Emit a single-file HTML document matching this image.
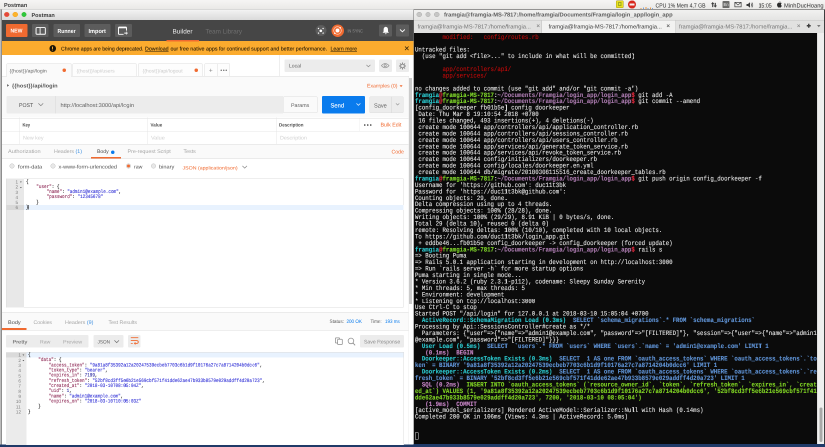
<!DOCTYPE html>
<html lang="en"><head><meta charset="utf-8"><title>Postman</title>
<style>
html,body{margin:0;padding:0;background:#fff;overflow:hidden}
#wrap{position:absolute;left:-2px;top:-83px;width:0;height:0}
#stage{position:absolute;left:0;top:0;width:827px;height:530px;zoom:2;transform:scale(.5);will-change:transform;text-rendering:geometricPrecision;transform-origin:0 0;overflow:hidden;background:#fff;font-family:"Liberation Sans", sans-serif}
#stage div{position:absolute;box-sizing:border-box}
#stage .t{white-space:pre;overflow:visible}
#stage svg{position:absolute;overflow:visible}
#stage .term{font-family:"Liberation Mono", monospace;transform-origin:0 0;white-space:pre}
#stage .term div, #stage .code div{position:static;white-space:pre}
#stage .term b{font-weight:bold}
#stage .code{font-family:"Liberation Mono", monospace;transform-origin:0 0;white-space:pre}
</style></head>
<body>
<div id="wrap"><div id="stage"><div id="page" style="left:2px;top:83px;width:825px;height:447px;overflow:hidden">
<div style="left:0px;top:444px;width:825px;height:3px;background:#203a68;"></div>
<div style="left:0px;top:0px;width:825px;height:9.3px;background:linear-gradient(#f6f5f4,#e9e8e6);"></div>
<div style="left:0px;top:9px;width:825px;height:0.5px;background:#b9b8b6;"></div>
<div class="t" style="left:4px;top:-0.4px;height:11.6px;line-height:11.6px;font-size:5.8px;color:#3c3c3c;font-weight:bold;transform:scaleX(0.9475);transform-origin:0 50%;">Postman</div>
<div style="left:616.2px;top:0.5px;width:7.5px;height:7.6px;background:#e9df22;border-radius:0.8px;border:0.4px solid #a89c14"></div>
<div style="left:618.2px;top:2px;width:3.4px;height:0.6px;background:#6a6a10;"></div>
<div style="left:618.2px;top:3.6px;width:1px;height:1px;background:#3c8a2a;"></div>
<div style="left:620.4px;top:3.6px;width:1px;height:1px;background:#3c8a2a;"></div>
<div style="left:618.2px;top:5.6px;width:3.4px;height:0.6px;background:#6a6a10;"></div>
<div style="left:627.9px;top:0.3px;width:8.2px;height:8.2px;background:#d8281e;border-radius:50%"></div>
<div style="left:629.4px;top:3.6px;width:5.2px;height:1.7px;background:#f4eeee;border-radius:0.3px"></div>
<div style="left:640.5px;top:8px;width:1px;height:1px;background:#e89a4a;"></div>
<div style="left:643px;top:7.6px;width:0.8px;height:1.4px;background:#7aa0d8;"></div>
<div style="left:645.5px;top:7.2px;width:0.8px;height:1.8px;background:#e89a4a;"></div>
<div style="left:647.6px;top:7.8px;width:0.8px;height:1.2px;background:#7aa0d8;"></div>
<div style="left:650px;top:7.4px;width:0.8px;height:1.6px;background:#e89a4a;"></div>
<div style="left:652.2px;top:8px;width:0.8px;height:1px;background:#7aa0d8;"></div>
<div class="t" style="left:655.7px;top:-0.7px;height:12px;line-height:12px;font-size:6px;color:#303030;transform:scaleX(0.8586);transform-origin:0 50%;">CPU 1% Mem 4,7 GB</div>
<svg style="left:710.8px;top:2.0px" width="6" height="5.6" viewBox="0 0 14 13"><path d="M4 0 L8 5 H5.3 V12 H2.7 V5 H0 Z M10 13 L6 8 H8.7 V2 H11.3 V8 H14 Z" fill="#3c3c3c"/></svg>
<div style="left:722.3px;top:1px;width:7.3px;height:6.9px;background:#6c6c6a;border-radius:0.8px"></div>
<div class="t" style="left:723.5px;top:0.6px;height:8.8px;line-height:8.8px;font-size:4.4px;color:#e8e8e8;transform:scaleX(0.9475);transform-origin:0 50%;">En</div>
<svg style="left:734.6px;top:2.2px" width="7" height="5.2" viewBox="0 0 14 10.4"><rect x="0.7" y="0.7" width="12.6" height="9" fill="none" stroke="#3c3c3c" stroke-width="1.4"/><path d="M1 1 L7 6 L13 1" fill="none" stroke="#3c3c3c" stroke-width="1.3"/></svg>
<svg style="left:746.5px;top:1.8px" width="6.4" height="6" viewBox="0 0 12.8 12"><path d="M0 4 H3 L7 0.5 V11.5 L3 8 H0 Z" fill="#3c3c3c"/><path d="M9 3 Q11.5 6 9 9 M10.8 1.2 Q14.5 6 10.8 10.8" fill="none" stroke="#3c3c3c" stroke-width="1.2"/></svg>
<div class="t" style="left:758.3px;top:-0.7px;height:12px;line-height:12px;font-size:6px;color:#303030;transform:scaleX(0.8791);transform-origin:0 50%;">15:05</div>
<svg style="left:777.2px;top:1.2px" width="4.8" height="6.6" viewBox="0 0 9.6 13.2"><path d="M6.8 0 Q6.6 2 4.8 2.6 Q4.9 0.8 6.8 0 Z M4.8 3.6 Q6.2 2.8 7.6 3.2 Q8.8 3.6 9.4 4.6 Q7.6 5.8 8 7.6 Q8.2 9 9.6 9.6 Q8.8 11.8 7.6 12.8 Q6.6 13.4 5.8 12.9 Q4.8 12.4 3.8 12.9 Q2.8 13.4 2 12.6 Q0 10.6 0 7.6 Q0.1 4.6 2.4 3.4 Q3.6 3 4.8 3.6 Z" fill="#2c2c2c"/></svg>
<div class="t" style="left:784.2px;top:-0.7px;height:12px;line-height:12px;font-size:6px;color:#303030;transform:scaleX(0.9575);transform-origin:0 50%;">MinhDucHoang</div>
<div style="left:0px;top:9.3px;width:0.8px;height:435.2px;background:#bcbcbc;"></div>
<div style="left:0.8px;top:9.3px;width:1.1px;height:435.2px;background:#8e8e8e;"></div>
<div style="left:2px;top:9.4px;width:411.3px;height:10.7px;background:linear-gradient(#fbfbfb,#f0f0f0 12%,#dadada);"></div>
<div style="left:4.1px;top:11.9px;width:5.3px;height:5.3px;background:#e2463f;border-radius:50%;border:0.5px solid #ee7c42"></div>
<div style="left:12.6px;top:11.9px;width:5.3px;height:5.3px;background:#fcb42c;border-radius:50%;border:0.5px solid #f4a224"></div>
<div style="left:21.3px;top:11.9px;width:5.3px;height:5.3px;background:#2dc840;border-radius:50%;border:0.5px solid #4cba34"></div>
<div class="t" style="left:31.5px;top:10.1px;height:11.2px;line-height:11.2px;font-size:5.6px;color:#3a3a3a;font-weight:bold;transform:scaleX(0.9862);transform-origin:0 50%;">Postman</div>
<div style="left:2px;top:19.9px;width:411.3px;height:21.2px;background:#464646;"></div>
<div style="left:6px;top:24.2px;width:21.5px;height:12.7px;background:#f06a30;border-radius:1px"></div>
<div class="t" style="left:10.7px;top:25.5px;height:11px;line-height:11px;font-size:5.5px;color:#fff;font-weight:bold;transform:scaleX(0.9271);transform-origin:0 50%;">NEW</div>
<div style="left:32px;top:24.2px;width:16.6px;height:12.7px;background:#5c5c5c;border-radius:1px"></div>
<svg style="left:35.3px;top:26.8px" width="10.4" height="7.8" viewBox="0 0 20.8 15.6"><rect x="1.1" y="1.1" width="18.6" height="13.4" rx="1.6" fill="none" stroke="#fff" stroke-width="1.9"/><path d="M9.2 1 V14.6" stroke="#fff" stroke-width="1.7"/></svg>
<div style="left:53.3px;top:24.2px;width:26.7px;height:12.7px;background:#5c5c5c;border-radius:1px"></div>
<div class="t" style="left:57.7px;top:25.6px;height:11.6px;line-height:11.6px;font-size:5.8px;color:#fff;font-weight:bold;transform:scaleX(0.8921);transform-origin:0 50%;">Runner</div>
<div style="left:84.3px;top:24.2px;width:26px;height:12.7px;background:#5c5c5c;border-radius:1px"></div>
<div class="t" style="left:88.5px;top:25.6px;height:11.6px;line-height:11.6px;font-size:5.8px;color:#fff;font-weight:bold;transform:scaleX(0.9646);transform-origin:0 50%;">Import</div>
<div style="left:114.8px;top:24.2px;width:17.3px;height:12.7px;background:#5c5c5c;border-radius:1px"></div>
<svg style="left:118.2px;top:26.3px" width="10.4" height="9.2" viewBox="0 0 20.8 18.4"><path d="M11.2 15.6 H2.4 Q1 15.6 1 14.2 V2.6 Q1 1.2 2.4 1.2 H15.6 Q17 1.2 17 2.6 V8.2" fill="none" stroke="#fff" stroke-width="1.9"/><path d="M1 2.2 H17" stroke="#fff" stroke-width="2.8"/><path d="M16 9.8 V16.6 M12.6 13.2 H19.4" stroke="#fff" stroke-width="1.9"/></svg>
<div class="t" style="left:172.7px;top:24.9px;height:12.8px;line-height:12.8px;font-size:6.4px;color:#ececec;transform:scaleX(1.0039);transform-origin:0 50%;">Builder</div>
<div class="t" style="left:205.7px;top:24.9px;height:12.8px;line-height:12.8px;font-size:6.4px;color:#707070;transform:scaleX(0.9869);transform-origin:0 50%;">Team Library</div>
<div style="left:315.3px;top:24.95px;width:11.2px;height:11.2px;background:#5c5c5c;border-radius:50%"></div>
<svg style="left:317.1px;top:26.75px" width="7.6" height="7.6" viewBox="0 0 15.2 15.2"><circle cx="7.6" cy="7.6" r="2.7" fill="#fff"/><path d="M2.2 2.2 L3.8 3.8 M13 2.2 L11.4 3.8 M2.2 13 L3.8 11.4 M13 13 L11.4 11.4" stroke="#fff" stroke-width="2.6"/></svg>
<div style="left:331.4px;top:24.25px;width:12.6px;height:12.6px;background:#f06a30;border-radius:50%"></div>
<svg style="left:332.7px;top:25.55px" width="10" height="10" viewBox="0 0 20 20"><circle cx="10" cy="10" r="7.6" fill="none" stroke="#ffd9c8" stroke-width="1.3"/><circle cx="10" cy="10" r="3.9" fill="#fff"/><circle cx="15.4" cy="4.6" r="1.5" fill="#fff"/><circle cx="4.6" cy="15.4" r="1.5" fill="#fff"/></svg>
<div class="t" style="left:347.4px;top:26.5px;height:9.2px;line-height:9.2px;font-size:4.6px;color:#8e8e8e;transform:scaleX(0.8262);transform-origin:0 50%;">IN SYNC</div>
<div style="left:379.1px;top:24.3px;width:12.9px;height:12.2px;background:#5c5c5c;border-radius:1px"></div>
<svg style="left:382.4px;top:26.6px" width="6.6" height="8" viewBox="0 0 13.2 16"><path d="M6.6 0.6 Q11 1.4 11 6.4 V10 L13 12.6 H0.2 L2.2 10 V6.4 Q2.2 1.4 6.6 0.6 Z M4.8 13.8 H8.4 Q8.2 15.6 6.6 15.6 Q5 15.6 4.8 13.8 Z" fill="#fff"/></svg>
<div style="left:396.2px;top:24.3px;width:12.6px;height:12.2px;background:#5c5c5c;border-radius:1px"></div>
<svg style="left:399.6px;top:29.2px" width="5.8" height="3.4" viewBox="0 0 11.6 6.8"><path d="M1 1 L5.8 5.6 L10.6 1" fill="none" stroke="#fff" stroke-width="1.8"/></svg>
<div style="left:2px;top:41px;width:411.3px;height:14px;background:#fbab2e;"></div>
<div style="left:166.4px;top:40px;width:32.4px;height:1.7px;background:#f06a30;"></div>
<div style="left:49.4px;top:45.2px;width:6.6px;height:6.6px;background:#1d1608;border-radius:50%"></div>
<div style="left:52.2px;top:46.3px;width:1px;height:2.9px;background:#fbab2e;border-radius:0.4px"></div>
<div style="left:52.2px;top:49.7px;width:1px;height:1px;background:#fbab2e;border-radius:50%"></div>
<div class="t" style="left:61px;top:43.9px;height:10.8px;line-height:10.8px;font-size:5.4px;color:#231805;transform:scaleX(0.9533);transform-origin:0 50%;-webkit-text-stroke:0.07px;">Chrome apps are being deprecated.</div>
<div class="t" style="left:145.1px;top:43.9px;height:10.8px;line-height:10.8px;font-size:5.4px;color:#231805;transform:scaleX(0.9827);transform-origin:0 50%;-webkit-text-stroke:0.07px;"><u>Download</u></div>
<div class="t" style="left:170.3px;top:43.9px;height:10.8px;line-height:10.8px;font-size:5.4px;color:#231805;transform:scaleX(0.9846);transform-origin:0 50%;-webkit-text-stroke:0.07px;">our free native apps for continued support and better performance.</div>
<div class="t" style="left:330.4px;top:43.9px;height:10.8px;line-height:10.8px;font-size:5.4px;color:#231805;transform:scaleX(0.9598);transform-origin:0 50%;-webkit-text-stroke:0.07px;"><u>Learn more</u></div>
<svg style="left:404.5px;top:46.0px" width="4.6" height="4.6" viewBox="0 0 9.2 9.2"><path d="M1 1 L8.2 8.2 M8.2 1 L1 8.2" stroke="#2e2008" stroke-width="1.4"/></svg>
<div style="left:2px;top:55px;width:411.3px;height:389.4px;background:#fff;"></div>
<div style="left:2px;top:55px;width:402px;height:21.6px;background:#fff;"></div>
<div style="left:2px;top:76.2px;width:407px;height:0.5px;background:#dcdcdc;"></div>
<div style="left:6.4px;top:63.4px;width:64.9px;height:13.4px;background:#fafafa;border:0.5px solid #dcdcdc;border-bottom:none;border-radius:1px 1px 0 0"></div>
<div class="t" style="left:9.7px;top:66.4px;height:9.8px;line-height:9.8px;font-size:4.9px;color:#666;transform:scaleX(1.0533);transform-origin:0 50%;">{{host}}/api/login</div>
<div style="left:62.4px;top:68.6px;width:3.4px;height:3.4px;background:#f06a30;border-radius:50%"></div>
<div style="left:72.3px;top:63.4px;width:64.4px;height:12.8px;background:#fdfdfd;border:0.5px solid #dcdcdc;border-bottom:none;border-radius:1px 1px 0 0"></div>
<div class="t" style="left:76.3px;top:66.4px;height:9.8px;line-height:9.8px;font-size:4.9px;color:#cacaca;transform:scaleX(1.0311);transform-origin:0 50%;">{{host}}/api/users</div>
<div style="left:137.8px;top:63.4px;width:64.6px;height:12.8px;background:#fdfdfd;border:0.5px solid #dcdcdc;border-bottom:none;border-radius:1px 1px 0 0"></div>
<div class="t" style="left:142.5px;top:66.4px;height:9.8px;line-height:9.8px;font-size:4.9px;color:#cacaca;transform:scaleX(1.0465);transform-origin:0 50%;">{{host}}/api/logout</div>
<div style="left:194.7px;top:68.6px;width:3.4px;height:3.4px;background:#f06a30;border-radius:50%"></div>
<div style="left:204.7px;top:63.4px;width:12.6px;height:12.8px;background:#fdfdfd;border:0.5px solid #dcdcdc;border-bottom:none;border-radius:1px 0 0 0"></div>
<div style="left:217px;top:63.4px;width:13px;height:12.8px;background:#fdfdfd;border:0.5px solid #dcdcdc;border-bottom:none;border-radius:0 1px 0 0"></div>
<div class="t" style="left:208.9px;top:64px;height:13.2px;line-height:13.2px;font-size:6.6px;color:#7a7a7a;">+</div>
<div style="left:220.3px;top:69.7px;width:1.5px;height:1.5px;background:#747474;border-radius:50%"></div>
<div style="left:222.9px;top:69.7px;width:1.5px;height:1.5px;background:#747474;border-radius:50%"></div>
<div style="left:225.5px;top:69.7px;width:1.5px;height:1.5px;background:#747474;border-radius:50%"></div>
<div style="left:279.1px;top:55px;width:0.5px;height:21.4px;background:#dcdcdc;"></div>
<div style="left:284.4px;top:59.6px;width:90.4px;height:12.3px;background:#ececec;border-radius:1px"></div>
<div class="t" style="left:289.2px;top:61.7px;height:10.4px;line-height:10.4px;font-size:5.2px;color:#606060;transform:scaleX(0.9660);transform-origin:0 50%;">Local</div>
<svg style="left:366.0px;top:64.6px" width="4.8" height="2.8" viewBox="0 0 9.6 5.6"><path d="M0.8 0.8 L4.8 4.6 L8.8 0.8" fill="none" stroke="#8c8c8c" stroke-width="1.3"/></svg>
<div style="left:379px;top:59.6px;width:12.9px;height:12.3px;background:#ececec;border-radius:1px"></div>
<svg style="left:381.2px;top:63.1px" width="8.4" height="5.2" viewBox="0 0 16.8 10.4"><path d="M0.8 5.2 Q8.4 -3.4 16 5.2 Q8.4 13.8 0.8 5.2 Z" fill="none" stroke="#989898" stroke-width="1.5"/><circle cx="8.4" cy="5.2" r="2.2" fill="none" stroke="#989898" stroke-width="1.5"/></svg>
<div style="left:396.1px;top:59.6px;width:12.8px;height:12.3px;background:#ececec;border-radius:1px"></div>
<svg style="left:399.0px;top:62.4px" width="7" height="7" viewBox="0 0 14 14"><circle cx="7" cy="7" r="3.6" fill="none" stroke="#8c8c8c" stroke-width="1.8"/><g stroke="#8c8c8c" stroke-width="2.0"><path d="M7 0 V3 M7 11 V14 M0 7 H3 M11 7 H14 M2 2 L4.2 4.2 M9.8 9.8 L12 12 M12 2 L9.8 4.2 M2 12 L4.2 9.8"/></g></svg>
<div style="left:2px;top:76.7px;width:406.8px;height:14.3px;background:#fafafa;"></div>
<svg style="left:7.0px;top:84.1px" width="2.2" height="2.8" viewBox="0 0 4.4 5.6"><path d="M0.4 0.2 L4 2.8 L0.4 5.4 Z" fill="#505050"/></svg>
<div class="t" style="left:12.2px;top:81.1px;height:10.8px;line-height:10.8px;font-size:5.4px;color:#555;font-weight:bold;transform:scaleX(1.0485);transform-origin:0 50%;">{{host}}/api/login</div>
<div class="t" style="left:366.8px;top:81.5px;height:10.4px;line-height:10.4px;font-size:5.2px;color:#f06a30;transform:scaleX(0.9964);transform-origin:0 50%;">Examples (0)</div>
<svg style="left:399.6px;top:84.9px" width="3.2" height="2.2" viewBox="0 0 6.4 4.4"><path d="M0.2 0.4 H6.2 L3.2 4.2 Z" fill="#f06a30"/></svg>
<div style="left:2px;top:91px;width:406.8px;height:26.4px;background:#fafafa;"></div>
<div style="left:6.4px;top:96.2px;width:276.6px;height:17.2px;background:#ececec;border-radius:1px 0 0 1px"></div>
<div class="t" style="left:19px;top:100.1px;height:11.2px;line-height:11.2px;font-size:5.6px;color:#505050;transform:scaleX(0.9321);transform-origin:0 50%;">POST</div>
<svg style="left:38.2px;top:103.2px" width="5.6" height="3.2" viewBox="0 0 11.2 6.4"><path d="M0.8 0.8 L5.6 5.4 L10.4 0.8" fill="none" stroke="#7a7a7a" stroke-width="1.4"/></svg>
<div style="left:55.3px;top:96.2px;width:0.5px;height:17.2px;background:#d8d8d8;"></div>
<div class="t" style="left:60.6px;top:100.1px;height:11px;line-height:11px;font-size:5.5px;color:#606060;transform:scaleX(1.0316);transform-origin:0 50%;">http://localhost:3000/api/login</div>
<div style="left:282.8px;top:96.5px;width:34.5px;height:16.6px;background:#fafafa;border:0.5px solid #dedede;border-radius:1px"></div>
<div class="t" style="left:291.2px;top:100.4px;height:10.6px;line-height:10.6px;font-size:5.3px;color:#606060;transform:scaleX(1.0027);transform-origin:0 50%;">Params</div>
<div style="left:322px;top:96.2px;width:43.2px;height:17.2px;background:#097bed;border-radius:1px"></div>
<div class="t" style="left:330.3px;top:99.6px;height:12.2px;line-height:12.2px;font-size:6.1px;color:#fff;transform:scaleX(0.9554);transform-origin:0 50%;-webkit-text-stroke:0.1px;">Send</div>
<svg style="left:355.8px;top:102.8px" width="4.8" height="2.8" viewBox="0 0 9.6 5.6"><path d="M0.8 0.8 L4.8 4.6 L8.8 0.8" fill="none" stroke="#d6e8fb" stroke-width="1.5"/></svg>
<div style="left:369.4px;top:96.5px;width:33.9px;height:16.6px;background:#ececec;border:0.5px solid #dedede;border-radius:1px"></div>
<div class="t" style="left:374.1px;top:99.7px;height:12px;line-height:12px;font-size:6px;color:#606060;transform:scaleX(0.9357);transform-origin:0 50%;">Save</div>
<div style="left:391.4px;top:96.5px;width:0.5px;height:16.6px;background:#d4d4d4;"></div>
<svg style="left:395.3px;top:103.1px" width="4.2" height="2.4" viewBox="0 0 8.4 4.8"><path d="M0.8 0.8 L4.2 4 L7.6 0.8" fill="none" stroke="#9a9a9a" stroke-width="1.3"/></svg>
<div style="left:2px;top:117.4px;width:406.8px;height:26.8px;background:#fff;"></div>
<div style="left:2px;top:118.2px;width:406.8px;height:0.5px;background:#dcdcdc;"></div>
<div style="left:2px;top:131.1px;width:406.6px;height:0.5px;background:#e6e6e6;"></div>
<div style="left:2px;top:144.2px;width:406.8px;height:0.5px;background:#dcdcdc;"></div>
<div style="left:19.5px;top:117.6px;width:0.5px;height:26.2px;background:#e6e6e6;"></div>
<div style="left:147.5px;top:117.6px;width:0.5px;height:26.2px;background:#e6e6e6;"></div>
<div style="left:276.2px;top:117.6px;width:0.5px;height:26.2px;background:#e6e6e6;"></div>
<div style="left:359.4px;top:118.4px;width:0.5px;height:12.6px;background:#efefef;"></div>
<div class="t" style="left:22.4px;top:120.5px;height:9.6px;line-height:9.6px;font-size:4.8px;color:#484848;font-weight:bold;transform:scaleX(0.8632);transform-origin:0 50%;">Key</div>
<div class="t" style="left:150.6px;top:120.5px;height:9.6px;line-height:9.6px;font-size:4.8px;color:#505050;font-weight:bold;transform:scaleX(0.9331);transform-origin:0 50%;">Value</div>
<div class="t" style="left:279px;top:120.5px;height:9.6px;line-height:9.6px;font-size:4.8px;color:#505050;font-weight:bold;transform:scaleX(0.9284);transform-origin:0 50%;">Description</div>
<div class="t" style="left:23.1px;top:133.7px;height:10.4px;line-height:10.4px;font-size:5.2px;color:#d0d0d0;transform:scaleX(1.0290);transform-origin:0 50%;">New key</div>
<div class="t" style="left:151.1px;top:133.7px;height:10.4px;line-height:10.4px;font-size:5.2px;color:#d0d0d0;transform:scaleX(1.0692);transform-origin:0 50%;">Value</div>
<div class="t" style="left:280px;top:133.7px;height:10.4px;line-height:10.4px;font-size:5.2px;color:#d0d0d0;transform:scaleX(1.0349);transform-origin:0 50%;">Description</div>
<div style="left:364.1px;top:124.2px;width:1.6px;height:1.6px;background:#666;border-radius:50%"></div>
<div style="left:367px;top:124.2px;width:1.6px;height:1.6px;background:#666;border-radius:50%"></div>
<div style="left:369.9px;top:124.2px;width:1.6px;height:1.6px;background:#666;border-radius:50%"></div>
<div class="t" style="left:380.3px;top:119.8px;height:10.8px;line-height:10.8px;font-size:5.4px;color:#f06a30;transform:scaleX(0.9810);transform-origin:0 50%;">Bulk Edit</div>
<div style="left:2px;top:144.6px;width:406.8px;height:13.9px;background:#fafafa;"></div>
<div style="left:2px;top:158.4px;width:406.8px;height:0.5px;background:#dcdcdc;"></div>
<div class="t" style="left:8.1px;top:147.1px;height:10.4px;line-height:10.4px;font-size:5.2px;color:#a6a6a6;transform:scaleX(1.0749);transform-origin:0 50%;">Authorization</div>
<div class="t" style="left:54px;top:147.1px;height:10.4px;line-height:10.4px;font-size:5.2px;color:#a6a6a6;transform:scaleX(1.0205);transform-origin:0 50%;">Headers <span style="color:#3d8fe0">(1)</span></div>
<div class="t" style="left:97.2px;top:147.1px;height:10.4px;line-height:10.4px;font-size:5.2px;color:#505050;transform:scaleX(0.9879);transform-origin:0 50%;">Body</div>
<div style="left:111.2px;top:150.4px;width:3.5px;height:3.5px;background:#097bed;border-radius:50%"></div>
<div style="left:90.8px;top:157px;width:30.1px;height:1.7px;background:#f06a30;"></div>
<div class="t" style="left:127.7px;top:147.1px;height:10.4px;line-height:10.4px;font-size:5.2px;color:#a6a6a6;transform:scaleX(1.0342);transform-origin:0 50%;">Pre-request Script</div>
<div class="t" style="left:183.7px;top:147.1px;height:10.4px;line-height:10.4px;font-size:5.2px;color:#a6a6a6;transform:scaleX(1.0138);transform-origin:0 50%;">Tests</div>
<div class="t" style="left:391.6px;top:147.2px;height:10.8px;line-height:10.8px;font-size:5.4px;color:#f06a30;transform:scaleX(0.9608);transform-origin:0 50%;">Code</div>
<div style="left:9.5px;top:163.5px;width:5px;height:5px;background:#e8e8e8;border-radius:50%;border:0.45px solid #c2c2c2"></div>
<div class="t" style="left:17.8px;top:162.7px;height:10.4px;line-height:10.4px;font-size:5.2px;color:#505050;transform:scaleX(1.0884);transform-origin:0 50%;">form-data</div>
<div style="left:50.4px;top:163.5px;width:5px;height:5px;background:#e8e8e8;border-radius:50%;border:0.45px solid #c2c2c2"></div>
<div class="t" style="left:58.5px;top:162.7px;height:10.4px;line-height:10.4px;font-size:5.2px;color:#505050;transform:scaleX(1.0608);transform-origin:0 50%;">x-www-form-urlencoded</div>
<div style="left:126px;top:163.5px;width:5px;height:5px;background:#e8e8e8;border-radius:50%;border:0.45px solid #c2c2c2"></div>
<div style="left:126.8px;top:164.3px;width:3.4px;height:3.4px;background:#f06a30;border-radius:50%"></div>
<div class="t" style="left:134.1px;top:162.7px;height:10.4px;line-height:10.4px;font-size:5.2px;color:#505050;transform:scaleX(1.0030);transform-origin:0 50%;">raw</div>
<div style="left:150.9px;top:163.5px;width:5px;height:5px;background:#e8e8e8;border-radius:50%;border:0.45px solid #c2c2c2"></div>
<div class="t" style="left:159px;top:162.7px;height:10.4px;line-height:10.4px;font-size:5.2px;color:#505050;transform:scaleX(1.0808);transform-origin:0 50%;">binary</div>
<div class="t" style="left:182.7px;top:163.4px;height:9.6px;line-height:9.6px;font-size:4.8px;color:#f06a30;transform:scaleX(1.0935);transform-origin:0 50%;">JSON (application/json)</div>
<svg style="left:242.0px;top:165.4px" width="5.4" height="3.2" viewBox="0 0 10.8 6.4"><path d="M0.8 0.8 L5.4 5.2 L10 0.8" fill="none" stroke="#8a8a8a" stroke-width="1.4"/></svg>
<div style="left:6px;top:178.4px;width:397.6px;height:129.2px;background:#fff;border:0.5px solid #dcdcdc"></div>
<div style="left:6.3px;top:178.7px;width:17.8px;height:128.6px;background:#e8e8e8;"></div>
<div style="left:6.3px;top:204.85px;width:397px;height:5.08px;background:#e8f2fe;"></div>
<div style="left:6.3px;top:204.85px;width:17.8px;height:5.08px;background:#d8d8d8;"></div>
<div class="t" style="left:15.5px;top:177.59px;height:9.2px;line-height:9.2px;font-size:4.6px;color:#7c7c7c;font-family:"Liberation Mono", monospace;letter-spacing:-0.26px">1</div>
<div class="t" style="left:15.5px;top:182.67px;height:9.2px;line-height:9.2px;font-size:4.6px;color:#7c7c7c;font-family:"Liberation Mono", monospace;letter-spacing:-0.26px">2</div>
<div class="t" style="left:15.5px;top:187.75px;height:9.2px;line-height:9.2px;font-size:4.6px;color:#7c7c7c;font-family:"Liberation Mono", monospace;letter-spacing:-0.26px">3</div>
<div class="t" style="left:15.5px;top:192.83px;height:9.2px;line-height:9.2px;font-size:4.6px;color:#7c7c7c;font-family:"Liberation Mono", monospace;letter-spacing:-0.26px">4</div>
<div class="t" style="left:15.5px;top:197.91px;height:9.2px;line-height:9.2px;font-size:4.6px;color:#7c7c7c;font-family:"Liberation Mono", monospace;letter-spacing:-0.26px">5</div>
<div class="t" style="left:15.5px;top:202.99px;height:9.2px;line-height:9.2px;font-size:4.6px;color:#7c7c7c;font-family:"Liberation Mono", monospace;letter-spacing:-0.26px">6</div>
<svg style="left:19.8px;top:181.69px" width="1.8" height="1.2" viewBox="0 0 3.6 2.4"><path d="M0 0 H3.6 L1.8 2.4 Z" fill="#555"/></svg>
<svg style="left:19.8px;top:186.77px" width="1.8" height="1.2" viewBox="0 0 3.6 2.4"><path d="M0 0 H3.6 L1.8 2.4 Z" fill="#555"/></svg>
<div class="code" style="left:26px;top:179.45px;font-size:5.156px;line-height:5.08px;-webkit-text-stroke:0.08px;transform:scaleX(0.8332)"><div style="height:5.08px">{</div><div style="height:5.08px">    <span style="color:#8a2250">"user"</span>: {</div><div style="height:5.08px">        <span style="color:#8a2250">"name"</span>: <span style="color:#2a2ad4">"admin1@example.com"</span>,</div><div style="height:5.08px">        <span style="color:#8a2250">"password"</span>: <span style="color:#2a2ad4">"12345678"</span></div><div style="height:5.08px">    }</div><div style="height:5.08px">}</div></div>
<div style="left:28.5px;top:205.15px;width:0.5px;height:4.48px;background:#000;"></div>
<div style="left:2px;top:311.9px;width:406.8px;height:0.5px;background:#dcdcdc;"></div>
<div style="left:2px;top:312.4px;width:406.8px;height:17.6px;background:#fafafa;"></div>
<div style="left:2px;top:329.9px;width:406.8px;height:0.5px;background:#dcdcdc;"></div>
<div class="t" style="left:8px;top:318px;height:10.4px;line-height:10.4px;font-size:5.2px;color:#505050;transform:scaleX(1.0723);transform-origin:0 50%;">Body</div>
<div style="left:2.1px;top:328.2px;width:24.6px;height:1.6px;background:#f06a30;"></div>
<div class="t" style="left:33.3px;top:318px;height:10.4px;line-height:10.4px;font-size:5.2px;color:#a6a6a6;transform:scaleX(0.9854);transform-origin:0 50%;">Cookies</div>
<div class="t" style="left:65px;top:318px;height:10.4px;line-height:10.4px;font-size:5.2px;color:#a6a6a6;transform:scaleX(1.0351);transform-origin:0 50%;">Headers <span style="color:#3d8fe0">(9)</span></div>
<div class="t" style="left:108.5px;top:318px;height:10.4px;line-height:10.4px;font-size:5.2px;color:#a6a6a6;transform:scaleX(1.0072);transform-origin:0 50%;">Test Results</div>
<div class="t" style="left:329.3px;top:316.9px;height:10px;line-height:10px;font-size:5px;color:#585858;transform:scaleX(0.9313);transform-origin:0 50%;">Status:</div>
<div class="t" style="left:346.4px;top:316.9px;height:10px;line-height:10px;font-size:5px;color:#097bed;transform:scaleX(0.9080);transform-origin:0 50%;">200 OK</div>
<div class="t" style="left:370.7px;top:316.9px;height:10px;line-height:10px;font-size:5px;color:#585858;transform:scaleX(0.9091);transform-origin:0 50%;">Time:</div>
<div class="t" style="left:384.9px;top:316.9px;height:10px;line-height:10px;font-size:5px;color:#097bed;transform:scaleX(0.9025);transform-origin:0 50%;">193 ms</div>
<div style="left:5.9px;top:335.2px;width:82.8px;height:12.5px;background:#ececec;border-radius:1px"></div>
<div class="t" style="left:12.5px;top:337.6px;height:10px;line-height:10px;font-size:5px;color:#505050;transform:scaleX(1.1330);transform-origin:0 50%;">Pretty</div>
<div class="t" style="left:40px;top:337.6px;height:10px;line-height:10px;font-size:5px;color:#a6a6a6;transform:scaleX(1.0292);transform-origin:0 50%;">Raw</div>
<div class="t" style="left:63px;top:337.6px;height:10px;line-height:10px;font-size:5px;color:#a6a6a6;transform:scaleX(1.0793);transform-origin:0 50%;">Preview</div>
<div style="left:93.7px;top:335.2px;width:29.9px;height:12.5px;background:#ececec;border-radius:1px"></div>
<div class="t" style="left:97.3px;top:337.6px;height:10px;line-height:10px;font-size:5px;color:#606060;transform:scaleX(0.9373);transform-origin:0 50%;">JSON</div>
<svg style="left:114.2px;top:340.2px" width="5.4" height="3.2" viewBox="0 0 10.8 6.4"><path d="M0.8 0.8 L5.4 5.2 L10 0.8" fill="none" stroke="#6e6e6e" stroke-width="1.4"/></svg>
<div style="left:128.2px;top:335.2px;width:12.5px;height:12.5px;background:#ececec;border-radius:1px"></div>
<svg style="left:130.4px;top:337.0px" width="8.2" height="7.6" viewBox="0 0 16.4 15.2"><path d="M0.6 1.4 H15.6 M0.6 7.2 H12.2 Q15.6 7.2 15.6 10 Q15.6 12.8 12.2 12.8 H8.4 M0.6 13 H4.6" fill="none" stroke="#f06a30" stroke-width="1.7"/><path d="M10 10.6 L7.6 12.8 L10 15" fill="none" stroke="#f06a30" stroke-width="1.4"/></svg>
<svg style="left:335.0px;top:337.4px" width="7.8" height="7.4" viewBox="0 0 15.6 14.8"><rect x="0.8" y="0.8" width="8.4" height="10.2" rx="1.2" fill="#fff" stroke="#8e8e8e" stroke-width="1.5"/><rect x="5.2" y="3.6" width="9.4" height="10.4" rx="1.2" fill="#fff" stroke="#8e8e8e" stroke-width="1.5"/></svg>
<svg style="left:347.4px;top:337.6px" width="8" height="8.2" viewBox="0 0 16 16.4"><circle cx="6.9" cy="6.9" r="5.6" fill="none" stroke="#8e8e8e" stroke-width="1.5"/><path d="M11 11 L15.2 15.6" stroke="#8e8e8e" stroke-width="1.8"/></svg>
<div style="left:360px;top:335.2px;width:43.9px;height:12.1px;background:#ececec;border-radius:1px"></div>
<div class="t" style="left:363.8px;top:336.9px;height:10.6px;line-height:10.6px;font-size:5.3px;color:#8c8c8c;transform:scaleX(0.9680);transform-origin:0 50%;">Save Response</div>
<div style="left:5.9px;top:351.9px;width:398.1px;height:93px;background:#fff;border:0.5px solid #dcdcdc;border-bottom:none"></div>
<div style="left:6.2px;top:352.2px;width:20.2px;height:93px;background:#ebebeb;"></div>
<div style="left:6.2px;top:352.45px;width:397.5px;height:5.165px;background:#e8f2fe;"></div>
<div style="left:6.2px;top:352.45px;width:20.2px;height:5.165px;background:#dadada;"></div>
<div class="t" style="left:18.4px;top:350.632px;height:9.2px;line-height:9.2px;font-size:4.6px;color:#7c7c7c;font-family:"Liberation Mono", monospace;letter-spacing:-0.26px">1</div>
<div class="t" style="left:18.4px;top:355.797px;height:9.2px;line-height:9.2px;font-size:4.6px;color:#7c7c7c;font-family:"Liberation Mono", monospace;letter-spacing:-0.26px">2</div>
<div class="t" style="left:18.4px;top:360.962px;height:9.2px;line-height:9.2px;font-size:4.6px;color:#7c7c7c;font-family:"Liberation Mono", monospace;letter-spacing:-0.26px">3</div>
<div class="t" style="left:18.4px;top:366.127px;height:9.2px;line-height:9.2px;font-size:4.6px;color:#7c7c7c;font-family:"Liberation Mono", monospace;letter-spacing:-0.26px">4</div>
<div class="t" style="left:18.4px;top:371.292px;height:9.2px;line-height:9.2px;font-size:4.6px;color:#7c7c7c;font-family:"Liberation Mono", monospace;letter-spacing:-0.26px">5</div>
<div class="t" style="left:18.4px;top:376.457px;height:9.2px;line-height:9.2px;font-size:4.6px;color:#7c7c7c;font-family:"Liberation Mono", monospace;letter-spacing:-0.26px">6</div>
<div class="t" style="left:18.4px;top:381.622px;height:9.2px;line-height:9.2px;font-size:4.6px;color:#7c7c7c;font-family:"Liberation Mono", monospace;letter-spacing:-0.26px">7</div>
<div class="t" style="left:18.4px;top:386.787px;height:9.2px;line-height:9.2px;font-size:4.6px;color:#7c7c7c;font-family:"Liberation Mono", monospace;letter-spacing:-0.26px">8</div>
<div class="t" style="left:18.4px;top:391.952px;height:9.2px;line-height:9.2px;font-size:4.6px;color:#7c7c7c;font-family:"Liberation Mono", monospace;letter-spacing:-0.26px">9</div>
<div class="t" style="left:15.9px;top:397.117px;height:9.2px;line-height:9.2px;font-size:4.6px;color:#7c7c7c;font-family:"Liberation Mono", monospace;letter-spacing:-0.26px">10</div>
<div class="t" style="left:15.9px;top:402.282px;height:9.2px;line-height:9.2px;font-size:4.6px;color:#7c7c7c;font-family:"Liberation Mono", monospace;letter-spacing:-0.26px">11</div>
<div class="t" style="left:15.9px;top:407.447px;height:9.2px;line-height:9.2px;font-size:4.6px;color:#7c7c7c;font-family:"Liberation Mono", monospace;letter-spacing:-0.26px">12</div>
<svg style="left:22.4px;top:354.732px" width="1.8" height="1.2" viewBox="0 0 3.6 2.4"><path d="M0 0 H3.6 L1.8 2.4 Z" fill="#555"/></svg>
<svg style="left:22.4px;top:359.897px" width="1.8" height="1.2" viewBox="0 0 3.6 2.4"><path d="M0 0 H3.6 L1.8 2.4 Z" fill="#555"/></svg>
<div class="code" style="left:28px;top:352.45px;font-size:5.156px;line-height:5.165px;-webkit-text-stroke:0.08px;transform:scaleX(0.8332)"><div style="height:5.165px">{</div><div style="height:5.165px">    <span style="color:#8a2250">"data"</span>: {</div><div style="height:5.165px">        <span style="color:#8a2250">"access_token"</span>: <span style="color:#2a2ad4">"9a81a8f35392a12a20247539ecbeb7703c6b1d9f10176a27c7a8714204b0dcc6"</span>,</div><div style="height:5.165px">        <span style="color:#8a2250">"token_type"</span>: <span style="color:#2a2ad4">"bearer"</span>,</div><div style="height:5.165px">        <span style="color:#8a2250">"expires_in"</span>: <span style="color:#1c1c9a">7199</span>,</div><div style="height:5.165px">        <span style="color:#8a2250">"refresh_token"</span>: <span style="color:#2a2ad4">"52bf8cd3ff5e6b21e569cbf571f41dde62ae47b933b8579e029addff4d20a723"</span>,</div><div style="height:5.165px">        <span style="color:#8a2250">"created_at"</span>: <span style="color:#2a2ad4">"2018-03-10T08:05:04Z"</span>,</div><div style="height:5.165px">        <span style="color:#8a2250">"uid"</span>: <span style="color:#1c1c9a">1</span>,</div><div style="height:5.165px">        <span style="color:#8a2250">"name"</span>: <span style="color:#2a2ad4">"admin1@example.com"</span>,</div><div style="height:5.165px">        <span style="color:#8a2250">"expires_on"</span>: <span style="color:#2a2ad4">"2018-03-10T10:05:03Z"</span></div><div style="height:5.165px">    }</div><div style="height:5.165px">}</div></div>
<div style="left:408.8px;top:76.7px;width:4.5px;height:367.8px;background:#fff;"></div>
<div style="left:408.6px;top:76.7px;width:0.4px;height:367.8px;background:#ececec;"></div>
<div style="left:409.1px;top:78px;width:2.7px;height:226px;background:#cbcbcb;"></div>
<div style="left:413.3px;top:9.3px;width:411.7px;height:434.8px;background:#6e6e6e;"></div>
<div style="left:824.1px;top:9.3px;width:0.9px;height:434.8px;background:#3e3e3e;"></div>
<div style="left:414px;top:9.9px;width:410.1px;height:10.2px;background:linear-gradient(#f1f1f0,#e4e4e3);"></div>
<div style="left:416.7px;top:12px;width:5.2px;height:5.2px;background:#c6c6c5;border-radius:50%;border:0.4px solid #b0b0af"></div>
<div style="left:425.4px;top:12px;width:5.2px;height:5.2px;background:#c6c6c5;border-radius:50%;border:0.4px solid #b0b0af"></div>
<div style="left:434.2px;top:12px;width:5.2px;height:5.2px;background:#c6c6c5;border-radius:50%;border:0.4px solid #b0b0af"></div>
<div class="t" style="left:444.2px;top:9.3px;height:11.4px;line-height:11.4px;font-size:5.7px;color:#5c5c5c;font-weight:bold;transform:scaleX(1.0123);transform-origin:0 50%;">framgia@framgia-MS-7817:/home/framgia/Documents/Framgia/login_app/login_app</div>
<div style="left:414px;top:20px;width:410.1px;height:12.8px;background:#e1e1e0;"></div>
<div style="left:414px;top:20px;width:410.1px;height:0.5px;background:#c4c4c3;"></div>
<div style="left:541.8px;top:20.3px;width:133.6px;height:12.6px;background:#f2f2f1;"></div>
<div style="left:541.6px;top:20.3px;width:0.4px;height:12.6px;background:#bdbdbc;"></div>
<div style="left:675.3px;top:20.3px;width:0.4px;height:12.6px;background:#bdbdbc;"></div>
<div class="t" style="left:417.6px;top:20.9px;height:11.6px;line-height:11.6px;font-size:5.8px;color:#737373;transform:scaleX(0.9983);transform-origin:0 50%;">framgia@framgia-MS-7817:/home/framgia...</div>
<div class="t" style="left:548.7px;top:20.9px;height:11.6px;line-height:11.6px;font-size:5.8px;color:#3a3a3a;transform:scaleX(0.9983);transform-origin:0 50%;">framgia@framgia-MS-7817:/home/framgia...</div>
<div class="t" style="left:679.1px;top:20.9px;height:11.6px;line-height:11.6px;font-size:5.8px;color:#737373;transform:scaleX(0.9983);transform-origin:0 50%;">framgia@framgia-MS-7817:/home/framgia...</div>
<svg style="left:536.3px;top:24.1px" width="3.4" height="3.4" viewBox="0 0 6.8 6.8"><path d="M0.8 0.8 L6 6 M6 0.8 L0.8 6" stroke="#858585" stroke-width="1.2"/></svg>
<svg style="left:666.7px;top:24.1px" width="3.4" height="3.4" viewBox="0 0 6.8 6.8"><path d="M0.8 0.8 L6 6 M6 0.8 L0.8 6" stroke="#555" stroke-width="1.2"/></svg>
<svg style="left:797px;top:24.1px" width="3.4" height="3.4" viewBox="0 0 6.8 6.8"><path d="M0.8 0.8 L6 6 M6 0.8 L0.8 6" stroke="#858585" stroke-width="1.2"/></svg>
<svg style="left:806.7px;top:23.5px" width="4.5" height="4.5" viewBox="0 0 10 10"><path d="M3.4 0.6 H6.6 V3.4 H9.4 V6.6 H6.6 V9.4 H3.4 V6.6 H0.6 V3.4 H3.4 Z" fill="#3c3c3c"/></svg>
<svg style="left:817.2px;top:24.8px" width="3.6" height="2.2" viewBox="0 0 7.2 4.4"><path d="M0 0 H7.2 L3.6 4.4 Z" fill="#7a7a7a"/></svg>
<div style="left:414.1px;top:32.8px;width:403.1px;height:411.4px;background:#0b0b0b;"></div>
<div style="left:817.2px;top:32.8px;width:6.9px;height:411.4px;background:#efefee;"></div>
<div style="left:817.2px;top:32.8px;width:0.4px;height:411.4px;background:#d0d0cf;"></div>
<div style="left:819.5px;top:407.7px;width:3px;height:34.5px;background:#a9a9a8;border-radius:1.5px"></div>
<div class="term" style="left:414.8px;top:34.319px;color:#e6e6e6;font-size:6.6px;line-height:6.445px;-webkit-text-stroke:0.1px;transform:scaleX(0.8679)"><div style="height:6.445px">        <span style="color:#c40a0a">modified:   config/routes.rb</span></div><div style="height:6.445px"> </div><div style="height:6.445px">Untracked files:</div><div style="height:6.445px">  (use "git add &lt;file&gt;..." to include in what will be committed)</div><div style="height:6.445px"> </div><div style="height:6.445px">        <span style="color:#c40a0a">app/controllers/api/</span></div><div style="height:6.445px">        <span style="color:#c40a0a">app/services/</span></div><div style="height:6.445px"> </div><div style="height:6.445px">no changes added to commit (use "git add" and/or "git commit -a")</div><div style="height:6.445px"><b style="color:#2bc9cf">framgia</b><b style="color:#e62a3e">@</b><b style="color:#80d92a">framgia-MS-7817</b><b style="color:#e6e6e6">:</b><b style="color:#aa7aae">~/Documents/Framgia/login_app/login_app</b><b style="color:#e62a3e">$</b> git add -A</div><div style="height:6.445px"><b style="color:#2bc9cf">framgia</b><b style="color:#e62a3e">@</b><b style="color:#80d92a">framgia-MS-7817</b><b style="color:#e6e6e6">:</b><b style="color:#aa7aae">~/Documents/Framgia/login_app/login_app</b><b style="color:#e62a3e">$</b> git commit --amend</div><div style="height:6.445px">[config_doorkeeper fb01b5e] config doorkeeper</div><div style="height:6.445px"> Date: Thu Mar 8 19:10:54 2018 +0700</div><div style="height:6.445px"> 16 files changed, 493 insertions(+), 4 deletions(-)</div><div style="height:6.445px"> create mode 100644 app/controllers/api/application_controller.rb</div><div style="height:6.445px"> create mode 100644 app/controllers/api/sessions_controller.rb</div><div style="height:6.445px"> create mode 100644 app/controllers/api/users_controller.rb</div><div style="height:6.445px"> create mode 100644 app/services/api/generate_token_service.rb</div><div style="height:6.445px"> create mode 100644 app/services/api/revoke_token_service.rb</div><div style="height:6.445px"> create mode 100644 config/initializers/doorkeeper.rb</div><div style="height:6.445px"> create mode 100644 config/locales/doorkeeper.en.yml</div><div style="height:6.445px"> create mode 100644 db/migrate/20180308115516_create_doorkeeper_tables.rb</div><div style="height:6.445px"><b style="color:#2bc9cf">framgia</b><b style="color:#e62a3e">@</b><b style="color:#80d92a">framgia-MS-7817</b><b style="color:#e6e6e6">:</b><b style="color:#aa7aae">~/Documents/Framgia/login_app/login_app</b><b style="color:#e62a3e">$</b> git push origin config_doorkeeper -f</div><div style="height:6.445px">Username for 'https://github.com': duc11t3bk</div><div style="height:6.445px">Password for 'https://duc11t3bk@github.com': </div><div style="height:6.445px">Counting objects: 29, done.</div><div style="height:6.445px">Delta compression using up to 4 threads.</div><div style="height:6.445px">Compressing objects: 100% (28/28), done.</div><div style="height:6.445px">Writing objects: 100% (29/29), 8.91 KiB | 0 bytes/s, done.</div><div style="height:6.445px">Total 29 (delta 10), reused 0 (delta 0)</div><div style="height:6.445px">remote: Resolving deltas: 100% (10/10), completed with 10 local objects.</div><div style="height:6.445px">To https://github.com/duc11t3bk/login_app.git</div><div style="height:6.445px"> + eddbe46...fb01b5e config_doorkeeper -&gt; config_doorkeeper (forced update)</div><div style="height:6.445px"><b style="color:#2bc9cf">framgia</b><b style="color:#e62a3e">@</b><b style="color:#80d92a">framgia-MS-7817</b><b style="color:#e6e6e6">:</b><b style="color:#aa7aae">~/Documents/Framgia/login_app/login_app</b><b style="color:#e62a3e">$</b> rails s</div><div style="height:6.445px">=&gt; Booting Puma</div><div style="height:6.445px">=&gt; Rails 5.0.1 application starting in development on http://localhost:3000</div><div style="height:6.445px">=&gt; Run `rails server -h` for more startup options</div><div style="height:6.445px">Puma starting in single mode...</div><div style="height:6.445px">* Version 3.6.2 (ruby 2.3.1-p112), codename: Sleepy Sunday Serenity</div><div style="height:6.445px">* Min threads: 5, max threads: 5</div><div style="height:6.445px">* Environment: development</div><div style="height:6.445px">* Listening on tcp://localhost:3000</div><div style="height:6.445px">Use Ctrl-C to stop</div><div style="height:6.445px">Started POST "/api/login" for 127.0.0.1 at 2018-03-10 15:05:04 +0700</div><div style="height:6.445px">  <b style="color:#2bc9cf">ActiveRecord::SchemaMigration Load (0.3ms)</b>  <b style="color:#5f93d6">SELECT `schema_migrations`.* FROM `schema_migrations`</b></div><div style="height:6.445px">Processing by Api::SessionsController#create as */*</div><div style="height:6.445px">  Parameters: {"user"=&gt;{"name"=&gt;"admin1@example.com", "password"=&gt;"[FILTERED]"}, "session"=&gt;{"user"=&gt;{"name"=&gt;"admin1</div><div style="height:6.445px">@example.com", "password"=&gt;"[FILTERED]"}}}</div><div style="height:6.445px">  <b style="color:#2bc9cf">User Load (0.5ms)</b>  <b style="color:#5f93d6">SELECT  `users`.* FROM `users` WHERE `users`.`name` = 'admin1@example.com' LIMIT 1</b></div><div style="height:6.445px">   <b style="color:#c584c4">(0.1ms)</b>  <b style="color:#c584c4">BEGIN</b></div><div style="height:6.445px">  <b style="color:#2bc9cf">Doorkeeper::AccessToken Exists (0.3ms)</b>  <b style="color:#5f93d6">SELECT  1 AS one FROM `oauth_access_tokens` WHERE `oauth_access_tokens`.`to</b></div><div style="height:6.445px"><b style="color:#5f93d6">ken` = BINARY '9a81a8f35392a12a20247539ecbeb7703c6b1d9f10176a27c7a8714204b0dcc6' LIMIT 1</b></div><div style="height:6.445px">  <b style="color:#2bc9cf">Doorkeeper::AccessToken Exists (0.2ms)</b>  <b style="color:#5f93d6">SELECT  1 AS one FROM `oauth_access_tokens` WHERE `oauth_access_tokens`.`re</b></div><div style="height:6.445px"><b style="color:#5f93d6">fresh_token` = BINARY '52bf8cd3ff5e6b21e569cbf571f41dde62ae47b933b8579e029addff4d20a723' LIMIT 1</b></div><div style="height:6.445px">  <b style="color:#c584c4">SQL (0.2ms)</b>  <b style="color:#80d424">INSERT INTO `oauth_access_tokens` (`resource_owner_id`, `token`, `refresh_token`, `expires_in`, `creat</b></div><div style="height:6.445px"><b style="color:#80d424">ed_at`) VALUES (1, '9a81a8f35392a12a20247539ecbeb7703c6b1d9f10176a27c7a8714204b0dcc6', '52bf8cd3ff5e6b21e569cbf571f41</b></div><div style="height:6.445px"><b style="color:#80d424">dde62ae47b933b8579e029addff4d20a723', 7200, '2018-03-10 08:05:04')</b></div><div style="height:6.445px">   <b style="color:#c584c4">(1.9ms)</b>  <b style="color:#c584c4">COMMIT</b></div><div style="height:6.445px">[active_model_serializers] Rendered ActiveModel::Serializer::Null with Hash (0.14ms)</div><div style="height:6.445px">Completed 200 OK in 106ms (Views: 4.3ms | ActiveRecord: 5.0ms)</div><div style="height:6.445px"> </div><div style="height:6.445px"> </div><div style="height:6.445px"> </div></div>
<div style="left:414.8px;top:432.4px;width:3.7px;height:7px;background:transparent;border:0.5px solid #d8d8d8"></div>
</div></div></div>
</body></html>
